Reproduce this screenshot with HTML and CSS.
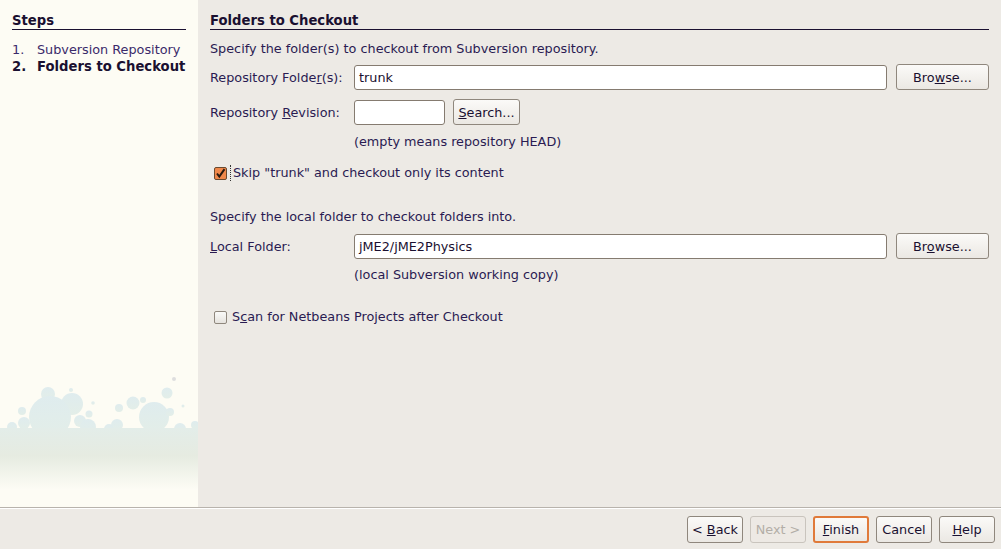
FILE: index.html
```html
<!DOCTYPE html>
<html>
<head>
<meta charset="utf-8">
<link rel="stylesheet" href="styles.css">
</head>
<body>
<div class="wizard">
  <div class="top">
    <aside class="steps">
      <div class="heading">Steps</div>
      <ol class="step-list">
        <li><span class="num">1.</span><span>Subversion Repository</span></li>
        <li class="current"><span class="num">2.</span><span>Folders to Checkout</span></li>
      </ol>
      <svg class="bubbles" width="198" height="125" viewBox="0 0 198 125">
        <defs>
          <linearGradient id="band" x1="0" y1="0" x2="0" y2="1">
            <stop offset="0" stop-color="#e3ede9"/>
            <stop offset="0.45" stop-color="#e6ebe1"/>
            <stop offset="1" stop-color="#fdfcf5"/>
          </linearGradient>
          <linearGradient id="bub" x1="0" y1="0" x2="0" y2="1">
            <stop offset="0" stop-color="#dfecee"/>
            <stop offset="1" stop-color="#e3eee8"/>
          </linearGradient>
        </defs>
        <g fill="url(#bub)">
          <circle cx="48" cy="29" r="7"/>
          <circle cx="72" cy="39" r="11"/>
          <circle cx="50" cy="52" r="21"/>
          <circle cx="22" cy="46" r="4"/>
          <circle cx="89" cy="49" r="3.5"/>
          <circle cx="80" cy="56" r="6"/>
          <circle cx="88" cy="62" r="8"/>
          <circle cx="119" cy="43" r="4"/>
          <circle cx="133" cy="38" r="6.5"/>
          <circle cx="143" cy="35" r="3"/>
          <circle cx="167" cy="28" r="5.5"/>
          <circle cx="154" cy="52" r="15"/>
          <circle cx="170" cy="47" r="4"/>
          <circle cx="117" cy="60" r="6"/>
          <circle cx="109" cy="64" r="5"/>
          <circle cx="12" cy="62" r="5"/>
          <circle cx="24" cy="58" r="6"/>
          <circle cx="180" cy="64" r="6"/>
          <circle cx="195" cy="60" r="4"/>
          <circle cx="71" cy="25" r="2" />
          <circle cx="93" cy="38" r="1.8"/>
          <circle cx="183" cy="41" r="1.5"/>
        </g>
        <circle cx="174" cy="14" r="2" fill="#dedede"/>
        <rect x="0" y="63" width="198" height="62" fill="url(#band)"/>
      </svg>
    </aside>
    <main class="panel">
      <div class="heading">Folders to Checkout</div>
      <p class="text t1">Specify the folder(s) to checkout from Subversion repository.</p>
      <div class="row r1">
        <label class="label">Repository Folde<u>r</u>(s):</label>
        <div class="field grow">trunk</div>
        <button class="btn browse">Bro<u>w</u>se...</button>
      </div>
      <div class="row r2">
        <label class="label">Repository <u>R</u>evision:</label>
        <div class="field small"></div>
        <button class="btn search"><u>S</u>earch...</button>
      </div>
      <p class="text hint h1">(empty means repository HEAD)</p>
      <div class="check c1">
        <span class="box checked">
          <svg width="13" height="13" viewBox="0 0 13 13"><path d="M3 6.5 L5.3 9.5 L10.5 2.2" fill="none" stroke="#2a1a10" stroke-width="2"/></svg>
        </span>
        <span class="focus">Skip "trunk" and checkout only its content</span>
      </div>
      <p class="text t2">Specify the local folder to checkout folders into.</p>
      <div class="row r3">
        <label class="label"><u>L</u>ocal Folder:</label>
        <div class="field grow">jME2/jME2Physics</div>
        <button class="btn browse">Br<u>o</u>wse...</button>
      </div>
      <p class="text hint h2">(local Subversion working copy)</p>
      <div class="check c2">
        <span class="box"></span>
        <span class="plain">S<u>c</u>an for Netbeans Projects after Checkout</span>
      </div>
    </main>
  </div>
  <footer class="bottom">
    <button class="btn nav">&lt; <u>B</u>ack</button>
    <button class="btn nav disabled">Next &gt;</button>
    <button class="btn nav default"><u>F</u>inish</button>
    <button class="btn nav">Cancel</button>
    <button class="btn nav"><u>H</u>elp</button>
  </footer>
</div>
</body>
</html>
```

FILE: styles.css
```css
* { box-sizing: border-box; }
html, body { margin: 0; padding: 0; }
body {
  width: 1001px;
  height: 549px;
  overflow: hidden;
  background: #edeae5;
  font-family: "DejaVu Sans", sans-serif;
  font-size: 12.8px;
  color: #2a1b52;
}
.wizard {
  display: flex;
  flex-direction: column;
  height: 549px;
}
.top {
  display: flex;
  height: 507px;
}
.steps {
  width: 198px;
  background: #fdfcf4;
  padding: 13px 12px 0 12px;
  display: flex;
  flex-direction: column;
}
.heading {
  font-weight: bold;
  font-size: 13.2px;
  line-height: 16px;
  height: 17px;
  border-bottom: 1px solid #1a1030;
  color: #1a1030;
}
.step-list {
  list-style: none;
  margin: 11px 0 0 0;
  padding: 0;
}
.step-list li {
  display: flex;
  line-height: 17px;
  height: 17px;
  color: #3a2a6a;
}
.step-list .num { width: 25px; }
.step-list li.current { font-weight: bold; font-size: 13.2px; color: #1a1030; }
.bubbles {
  display: block;
  margin: auto -12px 17px -12px;
}
.panel {
  flex: 1;
  padding: 13px 12px 0 12px;
}
.text {
  margin: 0;
  line-height: 16px;
  height: 16px;
}
.t1 { margin-top: 11px; }
.row {
  display: flex;
  align-items: center;
  height: 26px;
}
.r1 { margin-top: 7px; }
.r2 { margin-top: 9px; }
.r3 { margin-top: 8px; }
.label { width: 144px; }
.field {
  height: 25px;
  background: #fff;
  border: 1px solid #857b70;
  border-radius: 3px;
  padding: 0 4px;
  line-height: 23px;
  color: #1a1030;
}
.grow { flex: 1; }
.small { width: 91px; }
.btn {
  font-family: "DejaVu Sans", sans-serif;
  font-size: 12.8px;
  color: #1a1030;
  height: 26px;
  border: 1px solid #8f877d;
  border-radius: 3px;
  background: linear-gradient(#fbfaf8, #ebe8e3);
  padding: 0;
  text-align: center;
}
.browse { width: 93px; margin-left: 9px; }
.search { width: 67px; margin-left: 8px; }
.hint { margin-left: 144px; }
.h1 { margin-top: 9px; }
.h2 { margin-top: 8px; }
.check {
  display: flex;
  align-items: center;
  height: 16px;
  padding-left: 4px;
}
.c1 { margin-top: 15px; }
.c2 { margin-top: 26px; }
.t2 { margin-top: 28px; }
.box {
  width: 13px;
  height: 13px;
  border: 1px solid #8f877d;
  border-radius: 2px;
  background: linear-gradient(#fafaf8, #e6e3de);
  margin-right: 5px;
  display: block;
}
.box.checked {
  background: #f0884a;
  border-color: #6a4a30;
  margin-right: 3px;
}
.box svg { display: block; margin: -1px; }
.focus {
  border-left: 1px dotted #333;
  padding-left: 2px;
  line-height: 16px;
}
.plain { line-height: 16px; }
.bottom {
  height: 42px;
  border-top: 1px solid #b8b3ac;
  box-shadow: inset 0 1px 0 #ffffff;
  display: flex;
  justify-content: flex-end;
  align-items: flex-start;
  gap: 7px;
  padding: 8px 6px 0 0;
}
.nav { width: 56px; height: 27px; }
.nav.disabled {
  color: #b3aea7;
  border-color: #c9c4bd;
  background: #ede9e4;
}
.nav.default {
  border: 2px solid #e07a3a;
}
```
